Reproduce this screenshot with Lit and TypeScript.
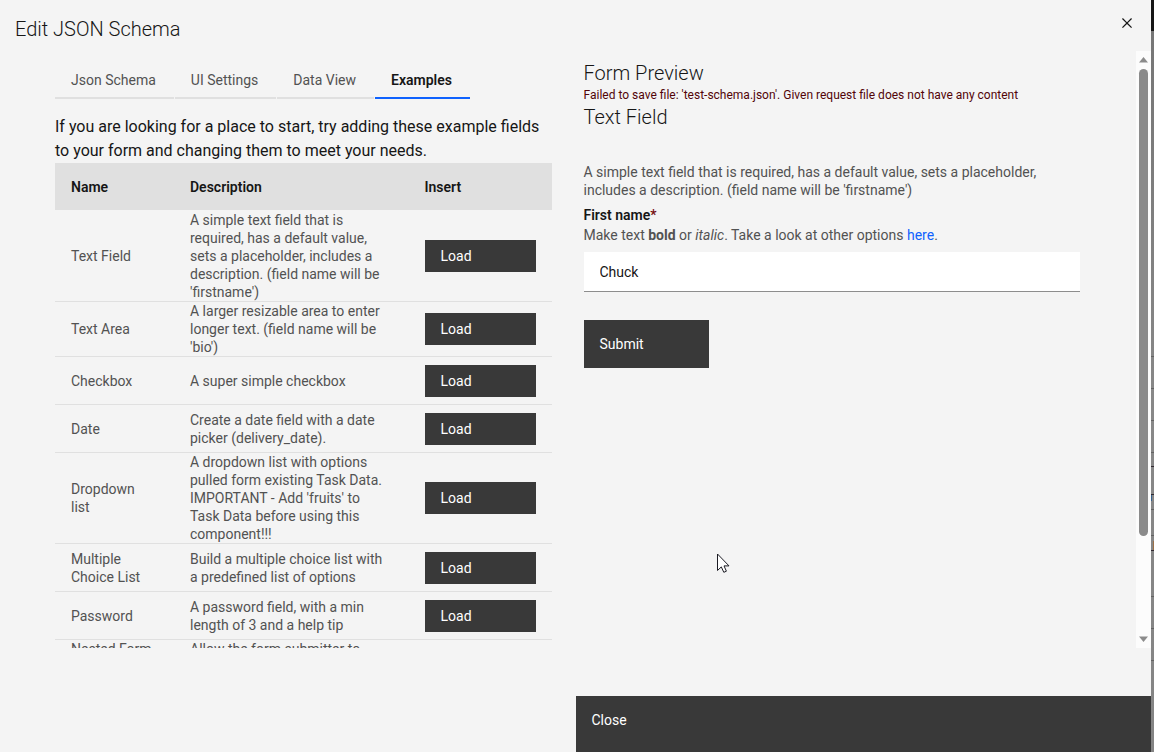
import { LitElement, html, css } from "lit";
import { customElement, state } from "lit/decorators.js";

interface Example {
  name: string;
  description: string;
  tall?: boolean;
}

const TABS = ["Json Schema", "UI Settings", "Data View", "Examples"];

const EXAMPLES: Example[] = [
  {
    name: "Text Field",
    description:
      "A simple text field that is required, has a default value, sets a placeholder, includes a description. (field name will be 'firstname')",
  },
  {
    name: "Text Area",
    description: "A larger resizable area to enter longer text. (field name will be 'bio')",
  },
  { name: "Checkbox", description: "A super simple checkbox" },
  { name: "Date", description: "Create a date field with a date picker (delivery_date)." },
  {
    name: "Dropdown list",
    description:
      "A dropdown list with options pulled form existing Task Data. IMPORTANT - Add 'fruits' to Task Data before using this component!!!",
  },
  {
    name: "Multiple Choice List",
    description: "Build a multiple choice list with a predefined list of options",
  },
  { name: "Password", description: "A password field, with a min length of 3 and a help tip" },
  { name: "Nested Form", description: "Allow the form submitter to", tall: true },
];

@customElement("app-root")
export class AppRoot extends LitElement {
  @state() private tab = "Examples";

  static styles = css`
    :host {
      display: flex;
      height: 100vh;
      overflow: hidden;
      background: #f4f4f4;
      color: #161616;
      font-family: Roboto, "Liberation Sans", sans-serif;
      font-size: 14px;
      line-height: 18px;
    }
    *,
    *::before {
      box-sizing: border-box;
    }
    h1,
    h2,
    p {
      margin: 0;
    }
    button,
    input {
      font: inherit;
      border: 0;
      border-radius: 0;
      margin: 0;
    }
    .modal {
      flex: 1;
      min-width: 0;
      display: flex;
      flex-direction: column;
    }
    .backdrop {
      flex: none;
      width: 3px;
      background: linear-gradient(#161616 31px, #767676 31px, #888 400px, #848484);
    }
    .header {
      display: flex;
      justify-content: space-between;
      height: 51px;
      padding-left: 15px;
    }
    h1,
    h2 {
      font-size: 20px;
      line-height: 28px;
      font-weight: 300;
    }
    h1 {
      padding-top: 15px;
    }
    .dismiss {
      display: grid;
      place-items: center;
      width: 48px;
      height: 48px;
      padding: 0 0 2px;
      background: none;
      color: #161616;
    }
    .body {
      flex: 1;
      min-height: 0;
      display: flex;
      margin-bottom: 48px;
    }
    .content {
      flex: 1;
      min-width: 0;
      display: grid;
      grid-template-columns: 1fr 1fr;
      gap: 32px;
      padding: 8px 56px 0 55px;
      overflow-y: auto;
      scrollbar-width: none;
    }
    .rail {
      flex: none;
      display: flex;
      flex-direction: column;
      align-items: center;
      width: 15px;
      padding: 6px 0;
      background: #fcfcfc;
    }
    .track {
      flex: 1;
      margin: 6px 0 4px;
    }
    .thumb {
      width: 9px;
      height: 83%;
      border-radius: 5px;
      background: #8b8b8b;
    }
    .arrow {
      display: block;
      fill: #8b8b8b;
    }
    .tabs {
      display: flex;
      gap: 1px;
      height: 40px;
    }
    .tab {
      padding: 4px 18px 0 16px;
      background: none;
      color: #525252;
      border-bottom: 2px solid #e0e0e0;
    }
    .tab.selected {
      color: #161616;
      font-weight: 600;
      border-color: #0f62fe;
    }
    .intro {
      margin-top: 16px;
      font-size: 16px;
      line-height: 24px;
    }
    table {
      width: 100%;
      table-layout: fixed;
      border-spacing: 0;
    }
    .col-name {
      width: 119px;
    }
    .col-insert {
      width: 143px;
    }
    th {
      height: 48px;
      padding: 0 16px;
      background: #e0e0e0;
      border-bottom: 1px solid #f4f4f4;
      text-align: left;
      font-weight: 600;
    }
    td {
      height: 48px;
      padding: 0 16px;
      border-bottom: 1px solid #e0e0e0;
      color: #525252;
      vertical-align: middle;
    }
    .name {
      padding-right: 20px;
    }
    .tall td {
      height: 91px;
    }
    .tall .name,
    .tall .about {
      vertical-align: top;
    }
    .primary {
      display: block;
      background: #393939;
      color: #fff;
      text-align: left;
      padding: 0 16px;
      height: 48px;
    }
    .load {
      width: 100%;
      height: 32px;
    }
    .error {
      font-size: 12px;
      line-height: 16px;
      color: #520408;
    }
    .description {
      margin-top: 32px;
      color: #525252;
    }
    .label {
      display: block;
      margin-top: 7px;
      font-weight: 600;
    }
    .required {
      color: #750e13;
    }
    .help {
      margin-top: 2px;
      color: #525252;
    }
    .help a {
      color: #0f62fe;
      text-decoration: none;
    }
    .field {
      display: block;
      width: 100%;
      height: 40px;
      margin-top: 8px;
      padding: 0 16px;
      background: #fff;
      color: #161616;
      border-bottom: 1px solid #8d8d8d;
    }
    .submit {
      width: 125px;
      margin-top: 28px;
    }
    .footer {
      display: flex;
      justify-content: flex-end;
    }
    .close {
      width: 50%;
      height: 56px;
      padding-bottom: 8px;
    }
    .pointer {
      position: absolute;
      left: 717px;
      top: 553px;
    }
  `;

  render() {
    return html`
      <section class="modal" role="dialog" aria-labelledby="title">
        <header class="header">
          <h1 id="title">Edit JSON Schema</h1>
          <button class="dismiss" aria-label="Close dialog">
            <svg width="20" height="20" viewBox="0 0 32 32" fill="currentColor">
              <path
                d="M24 9.4 22.6 8 16 14.6 9.4 8 8 9.4l6.6 6.6L8 22.6 9.4 24l6.6-6.6 6.6 6.6 1.4-1.4-6.6-6.6z"
              />
            </svg>
          </button>
        </header>
        <div class="body">
          <div class="content">${this.renderEditor()} ${this.renderPreview()}</div>
          <div class="rail" aria-hidden="true">
            <svg class="arrow" width="9" height="6"><path d="M4.5 0 9 5.5H0z" /></svg>
            <div class="track"><div class="thumb"></div></div>
            <svg class="arrow" width="9" height="6"><path d="M0 0.5h9L4.5 6z" /></svg>
          </div>
        </div>
        <footer class="footer"><button class="primary close">Close</button></footer>
      </section>
      <div class="backdrop">
        <svg width="3" height="752">
          <path
            stroke="#626262"
            d="M0 356.5h3M0 388.5h3M0 420.5h3M0 452.5h3M0 509.5h3M0 535.5h3M0 596.5h3M0 628.5h3M0 660.5h3"
          />
          <path stroke="#302830" d="M0 466.5h3M0 494.5h3M0 550.5h3" />
          <path stroke="#35608c" d="M0.5 495v6" />
          <path stroke="#9b7048" d="M2.5 541v9" />
        </svg>
      </div>
      <svg class="pointer" width="13" height="21" aria-hidden="true">
        <path
          d="M0.5 1v16.5l3.8-3.6 2.5 5.4 2.6-1.1-2.4-5.3h5z"
          fill="#fff"
          stroke="#1c1c24"
        />
      </svg>
    `;
  }

  private renderEditor() {
    return html`
      <div>
        <div class="tabs" role="tablist">
          ${TABS.map(
            (name) => html`<button
              role="tab"
              aria-selected=${name === this.tab}
              class="tab ${name === this.tab ? "selected" : ""}"
              @click=${() => (this.tab = name)}
            >
              ${name}
            </button>`
          )}
        </div>
        <p class="intro">
          If you are looking for a place to start, try adding these example fields to your form and
          changing them to meet your needs.
        </p>
        <table>
          <colgroup>
            <col class="col-name" />
            <col />
            <col class="col-insert" />
          </colgroup>
          <thead>
            <tr>
              <th>Name</th>
              <th>Description</th>
              <th>Insert</th>
            </tr>
          </thead>
          <tbody>
            ${EXAMPLES.map(
              (row) => html`<tr class=${row.tall ? "tall" : ""}>
                <td class="name">${row.name}</td>
                <td class="about">${row.description}</td>
                <td><button class="primary load">Load</button></td>
              </tr>`
            )}
          </tbody>
        </table>
      </div>
    `;
  }

  private renderPreview() {
    return html`
      <div>
        <h2>Form Preview</h2>
        <p class="error">
          Failed to save file: 'test-schema.json'. Given request file does not have any content
        </p>
        <h2>Text Field</h2>
        <p class="description">
          A simple text field that is required, has a default value, sets a placeholder, includes a
          description. (field name will be 'firstname')
        </p>
        <label class="label" for="firstname">First name<span class="required">*</span></label>
        <p class="help">
          Make text <b>bold</b> or <i>italic</i>. Take a look at other options
          <a href="#">here</a>.
        </p>
        <input class="field" id="firstname" type="text" value="Chuck" />
        <button class="primary submit">Submit</button>
      </div>
    `;
  }
}
